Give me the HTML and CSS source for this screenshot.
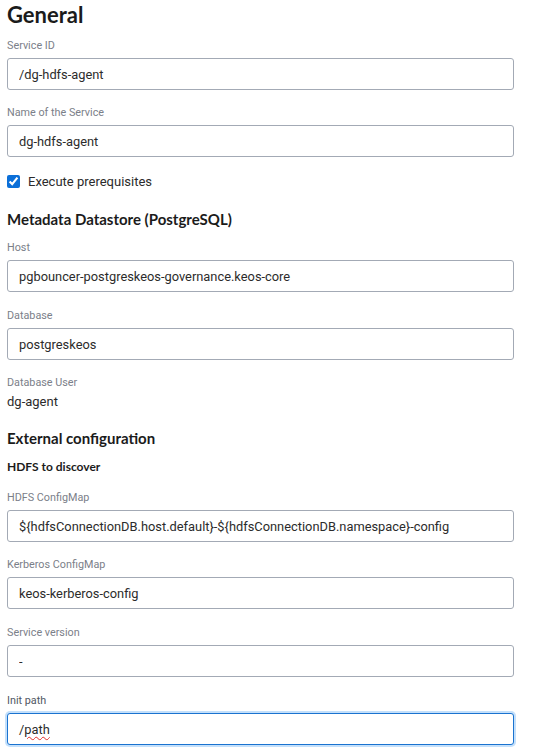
FILE: index.html
```html
<!DOCTYPE html>
<html lang="en">
<head>
<meta charset="utf-8">
<title>General</title>
<link rel="stylesheet" href="styles.css">
</head>
<body>
<main class="form">
  <h1 class="title">General</h1>

  <div class="field">
    <label class="label">Service ID</label>
    <input class="input" type="text" value="/dg-hdfs-agent">
  </div>

  <div class="field">
    <label class="label">Name of the Service</label>
    <input class="input" type="text" value="dg-hdfs-agent">
  </div>

  <label class="check">
    <input type="checkbox" checked>
    <span>Execute prerequisites</span>
  </label>

  <h2 class="section">Metadata Datastore (PostgreSQL)</h2>

  <div class="field field-loose">
    <label class="label">Host</label>
    <input class="input" type="text" value="pgbouncer-postgreskeos-governance.keos-core">
  </div>

  <div class="field">
    <label class="label">Database</label>
    <input class="input" type="text" value="postgreskeos">
  </div>

  <div class="field readonly">
    <span class="label">Database User</span>
    <span class="value">dg-agent</span>
  </div>

  <h2 class="section">External configuration</h2>
  <h3 class="subsection">HDFS to discover</h3>

  <div class="field">
    <label class="label">HDFS ConfigMap</label>
    <input class="input" type="text" value="${hdfsConnectionDB.host.default}-${hdfsConnectionDB.namespace}-config">
  </div>

  <div class="field field-loose">
    <label class="label">Kerberos ConfigMap</label>
    <input class="input" type="text" value="keos-kerberos-config">
  </div>

  <div class="field field-loose">
    <label class="label">Service version</label>
    <input class="input" type="text" value="-">
  </div>

  <div class="field">
    <label class="label label-focus">Init path</label>
    <div class="input input-focus" role="textbox">/<span class="misspelled">path</span></div>
  </div>
</main>
</body>
</html>
```

FILE: styles.css
```css
* { box-sizing: border-box; }

html, body {
  margin: 0;
  padding: 0;
  background: #ffffff;
}

body {
  font-family: Roboto, "Liberation Sans", Arial, sans-serif;
  color: #2b2b2b;
}

.form {
  width: 507px;
  margin-left: 7px;
  padding-top: 2px;
  display: flex;
  flex-direction: column;
}

.title {
  font-family: Lato, Inter, sans-serif;
  font-weight: 700;
  font-size: 22px;
  line-height: 26px;
  margin: 0 0 11px 0;
  color: #1b1b1b;
}

.field {
  display: flex;
  flex-direction: column;
  gap: 5px;
  margin-bottom: 16px;
}

.field-loose {
  margin-bottom: 17px;
}

.label {
  font-size: 10.8px;
  line-height: 14px;
  color: #7b8089;
}

.label-focus {
  color: #4f5763;
}

.input {
  height: 32px;
  width: 100%;
  border: 1px solid #a3aab5;
  border-radius: 3px;
  padding: 0 11px;
  font-family: Roboto, "Liberation Sans", Arial, sans-serif;
  font-size: 12.85px;
  color: #2b2b2b;
  background: #fff;
  outline: none;
}

.input-focus {
  display: flex;
  align-items: center;
  border-color: #1a73d0;
  box-shadow: 0 0 0 2px #c4e0fb;
}

.misspelled {
  text-decoration: underline wavy #e0302a;
  text-decoration-thickness: 1px;
  text-underline-offset: 2px;
}

.check {
  display: flex;
  align-items: center;
  gap: 8px;
  font-size: 13px;
  color: #2b2b2b;
  margin: 1px 0 20px 0;
}

.check input {
  margin: 0;
  width: 13px;
  height: 13px;
  accent-color: #0b6fd8;
}

.section {
  font-family: Lato, Inter, sans-serif;
  font-weight: 700;
  font-size: 15px;
  line-height: 20px;
  margin: 0 0 12px 0;
  color: #1b1b1b;
}

.subsection {
  font-family: Lato, Inter, sans-serif;
  font-weight: 700;
  font-size: 12px;
  line-height: 16px;
  margin: -1px 0 16px 0;
  color: #1b1b1b;
}

.readonly {
  gap: 4px;
  margin-bottom: 18px;
}

.value {
  font-size: 13px;
  line-height: 16px;
  color: #2b2b2b;
}
```
